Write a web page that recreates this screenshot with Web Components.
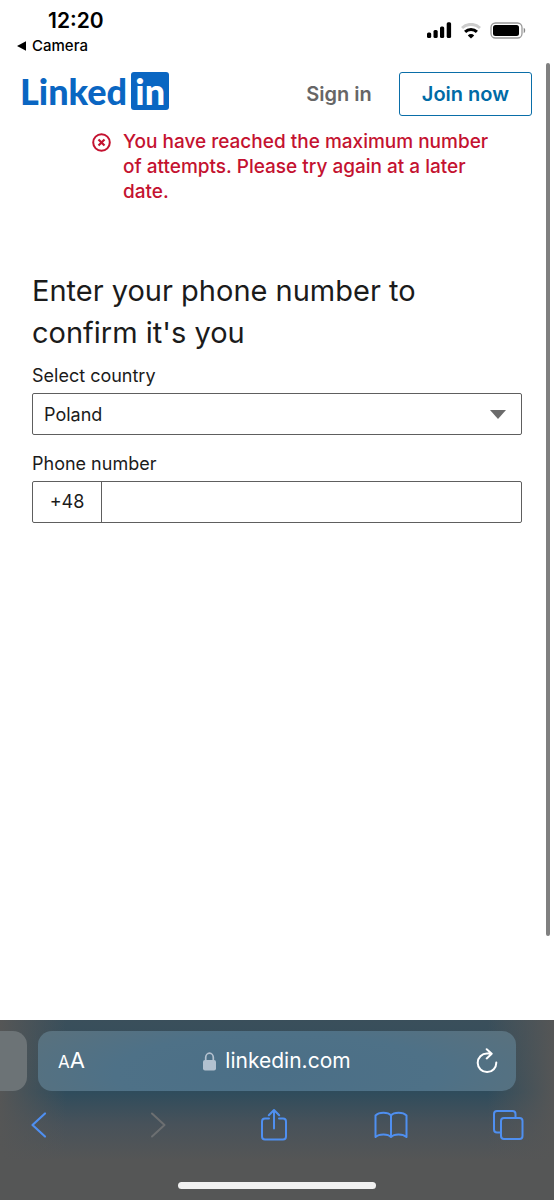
<!DOCTYPE html>
<html lang="en">
<head>
<meta charset="utf-8">
<meta name="viewport" content="width=device-width, initial-scale=1">
<title>LinkedIn</title>
<style>
  body {
    margin: 0;
    background: #fff;
    color: #1b1b1b;
    font-family: Inter, "Liberation Sans", sans-serif;
  }
</style>
</head>
<body>
<phone-screen>
  <status-bar slot="top" time="12:20">Camera</status-bar>
  <site-header></site-header>
  <error-message>You have reached the maximum number of attempts. Please try again at a later date.</error-message>
  <phone-form>Enter your phone number to confirm it's you</phone-form>
  <browser-bar slot="bottom">linkedin.com</browser-bar>
</phone-screen>

<script>
// Base class: puts the element's template() in an open shadow root
class BaseElement extends HTMLElement {
  constructor() {
    super();
    this.attachShadow({ mode: 'open' });
  }

  connectedCallback() {
    this.shadowRoot.innerHTML = `
      <style>
        *, :host { box-sizing: border-box; }
        svg { display: block; fill: none; stroke: currentColor; }
        button { margin: 0; padding: 0; border: 0; background: none; color: inherit; font: inherit; cursor: pointer; }
        a { color: inherit; text-decoration: none; }
      </style>
      ${this.template()}
    `;
  }
}

// Page frame: status bar, scrolling content, browser bar
class PhoneScreen extends BaseElement {
  template() {
    return `
      <style>
        :host { display: flex; flex-direction: column; min-height: 100vh; }
        .view { position: relative; flex: 1; padding-bottom: 84px; }
        .thumb {
          position: absolute; top: 0; right: 4px; bottom: 84px;
          width: 4px; border-radius: 2px; background: #808080;
        }
      </style>
      <slot name="top"></slot>
      <div class="view">
        <slot></slot>
        <div class="thumb"></div>
      </div>
      <slot name="bottom"></slot>
    `;
  }
}

class StatusBar extends BaseElement {
  template() {
    return `
      <style>
        :host {
          display: flex; justify-content: space-between; align-items: flex-start;
          height: 63px; padding: 8px 28px 0 16px; color: #000;
        }
        .time { padding-left: 32px; font-size: 21px; line-height: 26px; font-weight: 600; }
        .back { display: flex; align-items: center; gap: 5px; font-size: 15px; line-height: 24px; font-weight: 500; }
        .back svg { fill: currentColor; stroke: none; }
        .icons { display: flex; align-items: center; gap: 9px; padding-top: 14px; }
      </style>
      <div>
        <div class="time">${this.getAttribute('time')}</div>
        <button class="back">
          <svg width="11" height="10" viewBox="0 0 11 10"><path d="M1 5 10 .3v9.400z"/></svg>
          <span><slot></slot></span>
        </button>
      </div>
      <div class="icons">
        <svg width="26" height="17" viewBox="0 0 26 17" style="fill:#000;stroke:none">
          <rect x="1" y="10.500" width="4.200" height="5.500" rx="1.500"/>
          <rect x="7.500" y="8" width="4.200" height="8" rx="1.500"/>
          <rect x="14" y="4.500" width="4.200" height="11.500" rx="1.500"/>
          <rect x="20.700" y=".3" width="4.400" height="15.700" rx="1.500"/>
        </svg>
        <svg width="20" height="16" viewBox="0 0 20 16" style="stroke-width:3">
          <path d="M1 5a13 13 0 0 1 18 0" stroke="#ccc"/>
          <path d="M4.100 8.900a8.400 8.400 0 0 1 11.800 0"/>
          <path d="M6.800 12.400a4.600 4.600 0 0 1 6.400 0L10 15.600z" fill="#000" stroke="none"/>
        </svg>
        <svg width="36" height="17" viewBox="0 0 36 17">
          <rect x="1" y="1" width="31" height="15" rx="4.500" stroke="#999" stroke-width="1.300"/>
          <rect x="3" y="3" width="26" height="11" rx="2.500" fill="#000" stroke="none"/>
          <path d="M33.700 5.800c2 .8 2 4.600 0 5.400z" fill="#888" stroke="none"/>
        </svg>
      </div>
    `;
  }
}

class SiteHeader extends BaseElement {
  template() {
    return `
      <style>
        :host { display: flex; align-items: center; padding: 9px 22px 0 20px; }
        .logo {
          display: flex; gap: 4px; margin-right: auto; align-self: flex-start;
          color: #0a66c2; font-family: Lato, sans-serif; font-weight: 900; font-size: 36px; line-height: 38px;
        }
        .box {
          width: 38px; height: 38px; border-radius: 3px;
          background: #0a66c2; color: #fff; text-align: center;
        }
        .signin, .join { font-size: 20px; line-height: 24px; font-weight: 600; }
        .signin { color: #666; padding-right: 27px; }
        .join { padding: 9px 22px; border: 1px solid #0a6ea8; border-radius: 3px; color: #006ba6; }
      </style>
      <a class="logo" href="#" aria-label="LinkedIn"><span>Linked</span><span class="box">in</span></a>
      <a class="signin" href="#">Sign in</a>
      <a class="join" href="#">Join now</a>
    `;
  }
}

class ErrorMessage extends BaseElement {
  template() {
    return `
      <style>
        :host {
          display: flex; gap: 12px; padding: 13px 60px 0 92px;
          color: #c41230; font-size: 19px; line-height: 25px; font-weight: 500;
        }
        svg { flex: none; margin-top: 4px; }
      </style>
      <svg width="19" height="19" viewBox="0 0 19 19" stroke-width="2">
        <circle cx="9.500" cy="9.500" r="8.300"/>
        <path d="m6.500 6.500 6 6m0-6-6 6" stroke-width="2.200"/>
      </svg>
      <div role="alert"><slot></slot></div>
    `;
  }
}

class PhoneForm extends BaseElement {
  template() {
    return `
      <style>
        :host { display: block; padding: 66px 32px 0; }
        h1 { margin: 0; padding-right: 80px; font-size: 29px; line-height: 42px; font-weight: 400; }
        label { display: block; padding: 10px 0 5px; font-size: 18px; line-height: 24px; }
        .field { position: relative; display: flex; height: 42px; border: 1px solid #5e5e5e; border-radius: 2px; }
        .field + label { padding-top: 17px; }
        select, input {
          flex: 1; min-width: 0; margin: 0; border: 0; padding: 0 11px;
          background: transparent; color: inherit; font: inherit; font-size: 18px; appearance: none;
        }
        .field svg { position: absolute; right: 15px; top: 16px; fill: #6b6b6b; stroke: none; pointer-events: none; }
        .prefix { width: 69px; border-right: 1px solid #5e5e5e; text-align: center; font-size: 18px; line-height: 40px; }
      </style>
      <h1><slot></slot></h1>
      <label for="country">Select country</label>
      <div class="field">
        <select id="country"><option>Poland</option></select>
        <svg width="16" height="9" viewBox="0 0 16 9"><path d="M0 0h16L8 9z"/></svg>
      </div>
      <label for="phone">Phone number</label>
      <div class="field">
        <span class="prefix">+48</span>
        <input id="phone" type="tel">
      </div>
    `;
  }
}

// Address bar, toolbar and home indicator
class BrowserBar extends BaseElement {
  template() {
    return `
      <style>
        :host {
          display: block; height: 180px; padding-top: 11px; overflow: hidden; color: #fff;
          background:
            linear-gradient(90deg, #555656 0%, rgba(85, 86, 86, 0) 12%, rgba(85, 86, 86, 0) 88%, #555656 100%),
            linear-gradient(#3a4f5b 0%, #2f4c5c 40%, #48525a 58%, #555656 78%);
        }
        .tabs { display: flex; gap: 11px; padding-right: 38px; }
        .previous { width: 27px; height: 60px; border-radius: 0 14px 14px 0; background: #6c7376; }
        .address {
          flex: 1; display: grid; grid-template-columns: 60px 1fr 60px; align-items: center;
          height: 60px; border-radius: 14px;
          background: radial-gradient(ellipse 62% 120% at 50% 70%, #4b6f87 0%, #4e7187 55%, #5a717d 100%);
        }
        .size { padding-left: 20px; font-size: 22px; line-height: 28px; text-align: left; white-space: nowrap; }
        small { font-size: 17px; }
        .host { display: flex; justify-content: center; align-items: center; gap: 9px; font-size: 21px; line-height: 28px; }
        .host svg { fill: #b3c1cf; stroke: none; }
        .reload { justify-self: end; margin-right: 18px; }
        .tools { display: flex; justify-content: space-between; align-items: center; height: 68px; padding: 0 29px 0 22px; color: #4f8ff0; }
        .tools button { display: flex; justify-content: center; width: 34px; }
        .tools .forward { color: #6c6f71; }
        .home { width: 198px; height: 7px; margin: 23px auto 0; border-radius: 4px; background: #f0f0f0; }
      </style>
      <div class="tabs">
        <div class="previous"></div>
        <div class="address">
          <button class="size" aria-label="Page settings"><small>A</small>A</button>
          <div class="host">
            <svg width="13" height="19" viewBox="0 0 13 19">
              <rect y="8" width="13" height="10.500" rx="2"/>
              <path d="M2.700 9V5.500a3.800 4.300 0 0 1 7.600 0V9" fill="none" stroke="#b3c1cf" stroke-width="1.700"/>
            </svg>
            <span><slot></slot></span>
          </div>
          <button class="reload" aria-label="Reload">
            <svg width="22" height="26" viewBox="0 0 22 26" stroke-width="2" stroke-linecap="round" stroke-linejoin="round">
              <path d="M20.300 14.500A9.300 9.300 0 1 1 11 5.500h4.500M10.700 1.200l5 4.500-5 4.700"/>
            </svg>
          </button>
        </div>
      </div>
      <div class="tools">
        <button aria-label="Back">
          <svg width="20" height="28" viewBox="0 0 20 28" stroke-width="2.200" stroke-linecap="round" stroke-linejoin="round"><path d="M16 2.500 3.500 14 16 25.500"/></svg>
        </button>
        <button class="forward" aria-label="Forward">
          <svg width="20" height="28" viewBox="0 0 20 28" stroke-width="2" stroke-linecap="round" stroke-linejoin="round"><path d="M6 2.500 18.500 14 6 25.500"/></svg>
        </button>
        <button aria-label="Share">
          <svg width="28" height="34" viewBox="0 0 28 34" stroke-width="2" stroke-linecap="round" stroke-linejoin="round">
            <path d="M9 10.500H5A3 3 0 0 0 2 13.500v15a3 3 0 0 0 3 3h18a3 3 0 0 0 3-3v-15a3 3 0 0 0-3-3h-4M14 20.500V2M8.800 7.200 14 2l5.200 5.200"/>
          </svg>
        </button>
        <button aria-label="Bookmarks">
          <svg width="34" height="28" viewBox="0 0 34 28" stroke-width="2" stroke-linejoin="round">
            <path d="M17 4.500C14 .8 5 .8 1.500 4.500V26c3.500-3.500 12.500-3.500 15.500 0 3-3.500 12-3.500 15.500 0V4.500C29 .8 20 .8 17 4.500zM17 4.500V26"/>
          </svg>
        </button>
        <button aria-label="Tabs">
          <svg width="32" height="32" viewBox="0 0 32 32" stroke-width="2" stroke-linejoin="round">
            <rect x="9" y="9" width="21.500" height="21" rx="3"/>
            <path d="M9 23.500H5A3 3 0 0 1 2 20.500V5a3 3 0 0 1 3-3h15.500a3 3 0 0 1 3 3v4"/>
          </svg>
        </button>
      </div>
      <div class="home"></div>
    `;
  }
}

customElements.define('phone-screen', PhoneScreen);
customElements.define('status-bar', StatusBar);
customElements.define('site-header', SiteHeader);
customElements.define('error-message', ErrorMessage);
customElements.define('phone-form', PhoneForm);
customElements.define('browser-bar', BrowserBar);
</script>
</body>
</html>
